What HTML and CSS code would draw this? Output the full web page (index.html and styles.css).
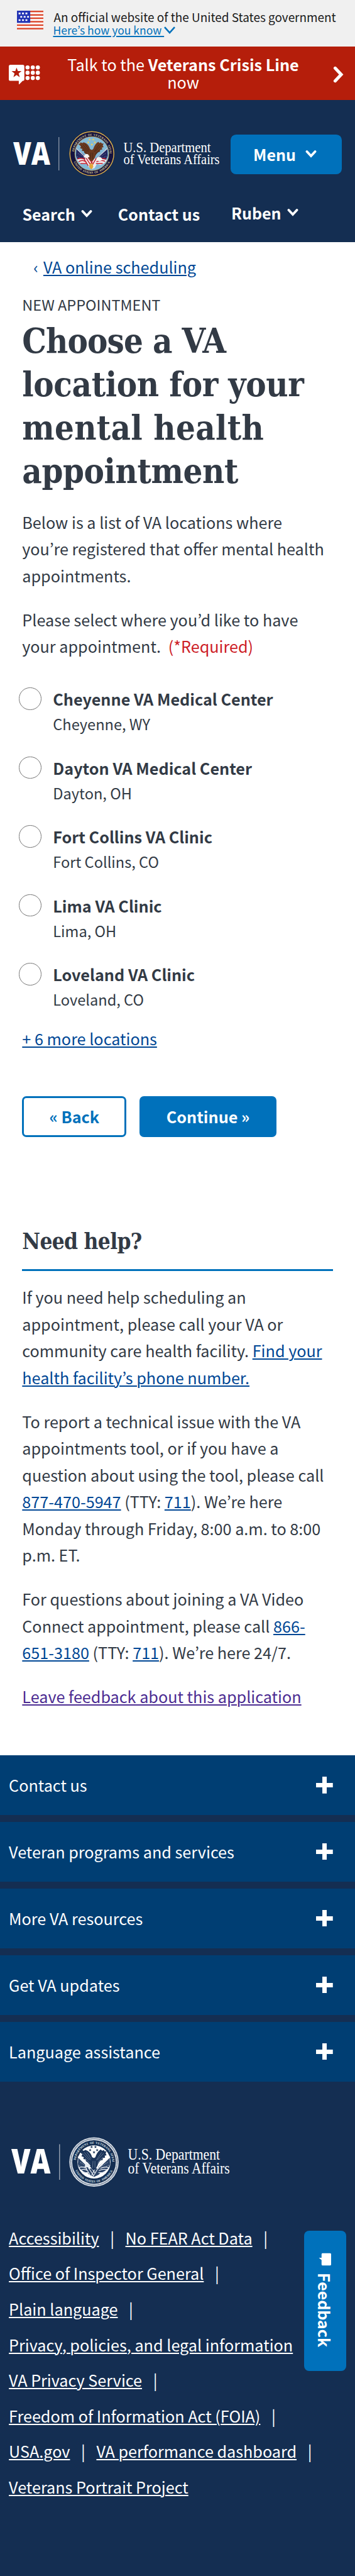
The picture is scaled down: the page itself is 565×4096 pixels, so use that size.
FILE: index.html
```
<!DOCTYPE html>
<html lang="en">
<head>
<meta charset="utf-8">
<title>Choose a VA location</title>
<link rel="stylesheet" href="styles.css">
</head>
<body>
<svg class="defs" width="0" height="0" aria-hidden="true">
  <defs>
    <path id="arc-top" d="M-39.400 0A39.400 39.400 0 0 1 39.400 0"/>
    <path id="arc-bottom" d="M-43.700 6A44.100 44.100 0 0 0 43.700 6"/>
    <path id="star" d="M0-3L.8-.9 3-.9 1.2.5 1.9 2.6 0 1.3-1.9 2.6-1.2.5-3-.9-.8-.9Z"/>
    <g id="stars">
      <use href="#star" x="-5" y="-31"/><use href="#star" x="3" y="-31"/>
      <use href="#star" x="-8" y="-24.500"/><use href="#star" x="6.500" y="-24.500"/><use href="#star" x="0" y="-20"/>
    </g>
    <path id="wings" d="M-30-21L-26-22L-25-25L-21-23L-18-25C-11-23-6-18-4-10L0-8L3-10C5-17 9-23 14-26L17-23L20-25L22-22L26-22L24-18L26-14L22-13L23-9L18-8L18-4L13-3C10 1 8 4 7 8L3 15L-2 17L-6 12L-9 8C-11 5-11 2-13 1L-17-2L-17-5L-22-6L-21-10L-26-12L-24-16Z"/>
    <path id="feathers" d="M-24-18L-10-4M-20-20L-7-4M-15-21L-6-7M-19-8L-8 3M20-18L7-4M16-20L5-4M19-10L8 0M16-5L7 3M-2-2L-3 12M2-2L2 12" fill="none"/>
    <path id="flag-left" d="M-34-11L-10 9L-15 23C-26 21-33 14-35 4Z"/>
    <path id="flag-right" d="M34-11L9 10L15 23C26 20 33 13 35 4Z"/>
    <path id="stripes" d="M-32 12Q-22 8-15 13M-29 18Q-20 12-12 19M-25 22L-12 22M-15 6L-1 28M-19 9L-8 27M-11 5L3 24M32 12Q22 9 13 13M29 17Q20 13 10 18M24 22L9 22M10 10L-2 30M4 10L-5 28" fill="none"/>
  </defs>
</svg>

<div class="gov">
  <svg class="gov-flag" viewBox="0 0 48 34" preserveAspectRatio="none">
    <path fill="#fff" d="M0 0h48v34H0z"/>
    <path stroke="#dc4a2f" stroke-width="2.800" d="M0 1.400h48M0 7.600h48M0 13.700h48M0 19.900h48M0 26h48M0 32.400h48"/>
    <path fill="#2334b4" d="M0 0h24v22H0z"/>
    <path stroke="#fff" stroke-width="3" stroke-dasharray="3.400 2.800" d="M3 5h16M6 11h16M3 17h16"/>
  </svg>
  <div>
    <div class="gov-text">An official website of the United States government</div>
    <div class="gov-link"><a href="#">Here’s how you know </a><svg viewBox="0 0 18 12"><path d="M1 1.200l8 8.800 8-8.800" fill="none" stroke="currentColor" stroke-width="2.600"/></svg></div>
  </div>
</div>

<a class="crisis" href="#">
  <svg class="crisis-chat" viewBox="0 0 56 36">
    <path fill="#fff" d="M3 0h22q3 0 3 3v23q0 3-3 3l-7 7v-7H3q-3 0-3-3V3q0-3 3-3z"/>
    <path fill="#b51e0b" d="M14 5l2.300 6.300h6.700l-5.300 4.200 2 7-5.700-4.100-5.700 4.100 2-7L5 11.300h6.700z"/>
    <g fill="#fff"><circle cx="33.800" cy="4.700" r="3.700"/><circle cx="43.200" cy="4.700" r="3.700"/><circle cx="52.300" cy="4.700" r="3.700"/><circle cx="33.800" cy="14.300" r="3.700"/><circle cx="43.200" cy="14.300" r="3.700"/><circle cx="52.300" cy="14.300" r="3.700"/><circle cx="33.800" cy="23.900" r="3.700"/><circle cx="43.200" cy="23.900" r="3.700"/><circle cx="52.300" cy="23.900" r="3.700"/></g>
  </svg>
  <span class="crisis-text">Talk to the <b>Veterans Crisis Line</b> now</span>
  <svg class="crisis-arrow" viewBox="0 0 15 24"><path d="M3 3l8.500 9L3 21" fill="none" stroke="#fff" stroke-width="4.400" stroke-linecap="round"/></svg>
</a>

<header class="head">
  <div class="head-top">
    <svg class="logo" viewBox="0 0 354 90">
      <text class="logo-va" x="9" y="61.600" font-size="49.500" textLength="59" lengthAdjust="spacingAndGlyphs">VA</text>
      <path stroke="#8b97a8" stroke-width="1.300" d="M81.700 18v53"/>
      <g transform="translate(134.200 44.200) scale(.722)">
        <circle r="50" fill="#14123f"/><circle r="48.500" fill="none" stroke="#d9b24c" stroke-width="2"/>
        <circle r="37.500" fill="#83b9d8" stroke="#caa54b" stroke-width="1"/>
        <g class="seal-text" fill="#d8c98f"><text><textPath href="#arc-top" startOffset="4">DEPARTMENT OF VETERANS AFFAIRS</textPath></text><text><textPath href="#arc-bottom" startOffset="13">UNITED STATES OF AMERICA</textPath></text></g>
        <use href="#stars" fill="#f0cf55"/>
        <use href="#flag-left" fill="#23275f"/><use href="#flag-right" fill="#23275f"/>
        <path d="M-34-11l23 22M34-11L10 11" stroke="#dfe3ea" stroke-width="1.500"/>
        <path d="M-30 0l14 8M-32 7l14 6M30 0l-14 8M32 6l-14 6" stroke="#aeb4d2" stroke-width="1.200" stroke-dasharray="1.200 2.600"/>
        <path d="M-33 13q9-4 16 0l4-5 9 2 8 2 11-2 18 4q-5 9-14 11l-8-2-5 9-6 2-6-3-4-8q-8 1-14-1-6-3-9-9z" fill="#f1e9ea"/>
        <use href="#stripes" stroke="#c5202f" stroke-width="2"/>
        <use href="#wings" fill="#6b3a20"/><use href="#feathers" stroke="#3d2115" stroke-width="1"/>
        <path d="M-16 3q4-4 8-1l3 5-6 3-7-2zM10 10q6-5 11-1l3 5-7 3-6-2z" fill="#f5f5f2"/>
        <path d="M-6 30l2-10 3 4 3-4 1 10-4 5z" fill="#e3a63a"/>
      </g>
      <text class="logo-name" x="184.500" y="41.500" font-size="22.200" textLength="139" lengthAdjust="spacingAndGlyphs">U.S. Department</text>
      <text class="logo-name" x="184.500" y="61.300" font-size="22.200" textLength="153" lengthAdjust="spacingAndGlyphs">of Veterans Affairs</text>
    </svg>
    <button class="menu">Menu <svg class="caret" viewBox="0 0 18 13"><path d="M2.500 3l6.500 7 6.500-7" fill="none" stroke="currentColor" stroke-width="3.800" stroke-linecap="round"/></svg></button>
  </div>
  <nav class="nav">
    <a class="nav-search" href="#">Search <svg class="caret" viewBox="0 0 18 13"><path d="M2.500 3l6.500 7 6.500-7" fill="none" stroke="currentColor" stroke-width="3.800" stroke-linecap="round"/></svg></a>
    <a class="nav-contact" href="#">Contact us</a>
    <a class="nav-user" href="#">Ruben <svg class="caret" viewBox="0 0 18 13"><path d="M2.500 3l6.500 7 6.500-7" fill="none" stroke="currentColor" stroke-width="3.800" stroke-linecap="round"/></svg></a>
  </nav>
</header>

<main class="main">
  <div class="crumb"><span>‹</span><a href="#">VA online scheduling</a></div>
  <div class="eyebrow">NEW APPOINTMENT</div>
  <h1><span class="tight">Choose a VA</span><br>location for your<br><span class="loose">mental health</span><br>appointment</h1>
  <p>Below is a list of VA locations where<br>you’re registered that offer mental health<br>appointments.</p>
  <p>Please select where you’d like to have<br>your appointment. <span class="required">(*Required)</span></p>
  <div class="options">
    <label class="option"><input type="radio" name="facility"><span><b>Cheyenne VA Medical Center</b><small>Cheyenne, WY</small></span></label>
    <label class="option"><input type="radio" name="facility"><span><b>Dayton VA Medical Center</b><small>Dayton, OH</small></span></label>
    <label class="option"><input type="radio" name="facility"><span><b>Fort Collins VA Clinic</b><small>Fort Collins, CO</small></span></label>
    <label class="option"><input type="radio" name="facility"><span><b>Lima VA Clinic</b><small>Lima, OH</small></span></label>
    <label class="option"><input type="radio" name="facility"><span><b>Loveland VA Clinic</b><small>Loveland, CO</small></span></label>
  </div>
  <a class="more" href="#">+ 6 more locations</a>
  <div class="actions">
    <button class="back">« Back</button>
    <button class="continue">Continue »</button>
  </div>
  <section class="help">
    <h2>Need help?</h2>
    <p>If you need help scheduling an<br>appointment, please call your VA or<br>community care health facility. <a href="#">Find your<br>health facility’s phone number.</a></p>
    <p>To report a technical issue with the VA<br>appointments tool, or if you have a<br>question about using the tool, please call<br><a href="#">877-470-5947</a> (TTY: <a href="#">711</a>). We’re here<br>Monday through Friday, 8:00 a.m. to 8:00<br>p.m. ET.</p>
    <p>For questions about joining a VA Video<br>Connect appointment, please call <a href="#">866-<br>651-3180</a> (TTY: <a href="#">711</a>). We’re here 24/7.</p>
    <p><a class="visited" href="#">Leave feedback about this application</a></p>
  </section>
</main>

<footer class="foot">
  <div class="acc">
    <button>Contact us<i class="plus"></i></button>
    <button>Veteran programs and services<i class="plus"></i></button>
    <button>More VA resources<i class="plus"></i></button>
    <button>Get VA updates<i class="plus"></i></button>
    <button>Language assistance<i class="plus"></i></button>
  </div>
  <svg class="foot-logo" viewBox="0 0 400 90">
    <text class="logo-va" x="18" y="64.900" font-size="54" textLength="62.500" lengthAdjust="spacingAndGlyphs">VA</text>
    <path stroke="#a4adbb" stroke-width="1.300" d="M94.800 18.500v56.500"/>
    <g transform="translate(149.600 46.700) scale(.786)">
      <circle r="50" fill="#e6eaef"/><circle r="47" fill="none" stroke="#142e52" stroke-width="2.400" stroke-dasharray="1.100 1.400"/>
      <circle r="44.200" fill="#142e52"/><circle r="33.500" fill="#fff"/>
      <g class="seal-text" transform="scale(.94)" fill="#dfe4ea"><text><textPath href="#arc-top" startOffset="4">DEPARTMENT OF VETERANS AFFAIRS</textPath></text><text><textPath href="#arc-bottom" startOffset="13">UNITED STATES OF AMERICA</textPath></text></g>
      <g transform="scale(.98)">
        <use href="#stars" fill="#142e52"/>
        <use href="#flag-left" fill="#2c4468" transform="scale(.95)"/><use href="#flag-right" fill="#2c4468" transform="scale(.95)"/>
        <path d="M-33-11l23 22M33-11L10 11" stroke="#fff" stroke-width="3"/>
        <path d="M-28 1l13 8M-30 8l14 6M28 1l-13 8M30 7l-14 6" stroke="#fff" stroke-width="1.200" stroke-dasharray="1.200 2.400"/>
        <path d="M-19 16L0 12L19 16L10 26L0 31L-10 26Z" fill="#2c4468"/>
        <use href="#stripes" stroke="#e8ecf1" stroke-width="1.500"/>
        <use href="#wings" fill="#1b3459"/><use href="#feathers" stroke="#8b9ab0" stroke-width=".8"/>
        <path d="M-18 6q4-5 8-2l3 4-7 3-5-1z" fill="#e8ecf1"/>
      </g>
    </g>
    <text class="logo-name" x="203.600" y="43" font-size="24.500" textLength="146.500" lengthAdjust="spacingAndGlyphs">U.S. Department</text>
    <text class="logo-name" x="203.600" y="64.700" font-size="24.500" textLength="162" lengthAdjust="spacingAndGlyphs">of Veterans Affairs</text>
  </svg>
  <ul class="links">
    <li><a href="#">Accessibility</a></li>
    <li><a href="#">No FEAR Act Data</a></li>
    <li><a href="#">Office of Inspector General</a></li>
    <li><a href="#">Plain language</a></li>
    <li><a href="#">Privacy, policies, and legal information</a></li>
    <li><a href="#">VA Privacy Service</a></li>
    <li><a href="#">Freedom of Information Act (FOIA)</a></li>
    <li><a href="#">USA.gov</a></li>
    <li><a href="#">VA performance dashboard</a></li>
    <li><a href="#">Veterans Portrait Project</a></li>
  </ul>
  <button class="feedback"><svg viewBox="0 0 21 21"><path fill="#fff" d="M2 0h17q2 0 2 2v12q0 2-2 2h-7.500L8 20.500V16H2q-2 0-2-2V2q0-2 2-2z"/></svg>Feedback</button>
</footer>
</body>
</html>
```
FILE: styles.css
```
* { box-sizing: border-box; }
body {
  margin: 0;
  width: 565px;
  color: #323a45;
  background: #fff;
  font-family: "Noto Sans CJK KR", "Noto Sans", sans-serif;
  font-size: 25.2px;
  line-height: 42.4px;
  white-space: nowrap;
}
button { font: inherit; border: 0; margin: 0; padding: 0; cursor: pointer; }
a { color: #004795; text-decoration-thickness: 1.8px; text-underline-offset: 2px; }
svg { display: block; flex: none; }
.defs { position: absolute; }

.gov { display: flex; gap: 16.500px; height: 74.2px; padding: 17px 0 0 26.8px; background: #f0f0f0; color: #1b1b1b; font-size: 18.95px; line-height: 20.6px; }
.gov-flag { width: 42.200px; height: 30px; margin-top: .4px; }
.gov-link { display: flex; align-items: center; margin-left: -1px; font-size: 17.5px; color: #0071bb; }
.gov-link a { color: inherit; white-space: pre; }
.gov-link svg { width: 18px; height: 12px; margin-top: 1px; }

.crisis { display: flex; align-items: center; height: 84.700px; padding: 0 18px 0 14.1px; background: #b51e0b; color: #fff; line-height: 28.3px; text-decoration: none; }
.crisis-chat { width: 49.500px; height: 31.800px; margin-top: 4px; }
.crisis-text { width: 456.900px; padding: 0 42px 1px; text-align: center; white-space: normal; }
.crisis-arrow { width: 17px; height: 29px; margin: 3px 0 0 10.5px; }

.head { height: 226.200px; background: #142e52; color: #fff; font-weight: 700; font-size: 25px; }
.head-top { display: flex; align-items: flex-start; padding: 41.1px 0 0 12.2px; }
.logo { width: 354px; height: 90px; }
.logo-va { font-family: "Open Sans", sans-serif; font-weight: 800; fill: #fff; }
.logo-name { font-family: "Liberation Serif", serif; font-weight: 400; fill: #fff; }
.seal-text { font: 700 6.600px "Liberation Serif", serif; word-spacing: 1.500px; }
.menu { display: flex; align-items: center; gap: 15px; width: 176.500px; height: 63.400px; margin: 13.7px 0 0 .9px; padding: 0 0 0 36px; border-radius: 8.800px; background: #0071bb; color: #fff; font-weight: 700; }
.caret { width: 18px; height: 13px; margin-top: -1px; }
.nav { display: flex; height: 30px; line-height: 30px; margin-top: 35.500px; padding-left: 35.5px; }
.nav a { display: flex; align-items: center; color: #fff; text-decoration: none; gap: 9px; }
.nav-contact { margin-left: 41px; }
.nav .nav-user { margin: -4px 0 0 50px; }

.main { padding: 17.500px 35.3px 0; height: 2405.500px; }
.crumb { display: flex; gap: 8px; padding-left: 18px; color: #004795; }
.eyebrow { margin-top: 23.500px; font-size: 23.500px; line-height: 32px; }
h1 { margin: 8px 0 24.6px; font: 700 54px/68.900px "DejaVu Serif Condensed", "DejaVu Serif", serif; letter-spacing: -.4px; }
.tight { letter-spacing: -.9px; }
.loose { letter-spacing: .3px; }
p { margin: 0 0 27.9px; }
.required { margin-left: 6px; color: #cd2026; }
.options { margin-top: 43.400px; }
.option { display: flex; height: 109.500px; line-height: 39.600px; }
.option b, .option small { display: block; }
.option small { margin-top: .7px; font-size: 23.600px; }
.option:last-child { height: 79.200px; }
.option input { appearance: none; width: 35.500px; height: 35.500px; margin: 1.2px 18.500px 0 -5px; border: 1.500px solid #757575; border-radius: 50%; background: #fff; }
.more { display: block; margin-top: 20.8px; }
.actions { display: flex; gap: 21.2px; margin-top: 70.8px; }
.actions button { height: 64.500px; border-radius: 7px; font-weight: 700; }
.back { width: 166px; border: 3.500px solid #0071bb; background: #fff; color: #0071bb; }
.continue { width: 217.200px; background: #0071bb; color: #fff; }
.help { margin-top: 143.5px; }
h2 { height: 69.400px; margin: 0 0 20.900px; border-bottom: 3.500px solid #0071bb; font: 700 35px/46px "DejaVu Serif Condensed", "DejaVu Serif", serif; letter-spacing: -.7px; }
.help .visited { color: #4c2c92; }

.foot { position: relative; height: 1305.400px; background: #142e52; color: #fff; }
.acc { display: flex; flex-direction: column; gap: 10.600px; }
.acc button { display: flex; align-items: center; justify-content: space-between; height: 95.400px; padding: 0 35.3px 0 14.100px; background: #003e73; color: #fff; }
.plus { width: 26.500px; height: 26.500px; background: linear-gradient(#fff, #fff) center / 7px 100% no-repeat, linear-gradient(#fff, #fff) center / 100% 7px no-repeat; }
.foot-logo { width: 400px; height: 90px; margin-top: 80.700px; }
.links { margin: 49.300px 0 0; padding: 0 25px 0 14.100px; list-style: none; line-height: 56.600px; white-space: normal; display: flex; flex-wrap: wrap; }
.links li { display: flex; white-space: nowrap; }
.links li:not(:last-child)::after { content: "|"; width: 42px; text-align: center; }
.links a { color: #fff; }
.feedback { position: absolute; left: 484px; top: 756.300px; width: 66.500px; height: 223.500px; display: flex; align-items: center; gap: 11px; padding: 35px 0 0; writing-mode: vertical-rl; border-radius: 8px; background: #0071bb; color: #fff; font-weight: 700; font-size: 25px; line-height: 66px; }
.feedback svg { width: 20px; height: 21px; transform: rotate(90deg); }
```
